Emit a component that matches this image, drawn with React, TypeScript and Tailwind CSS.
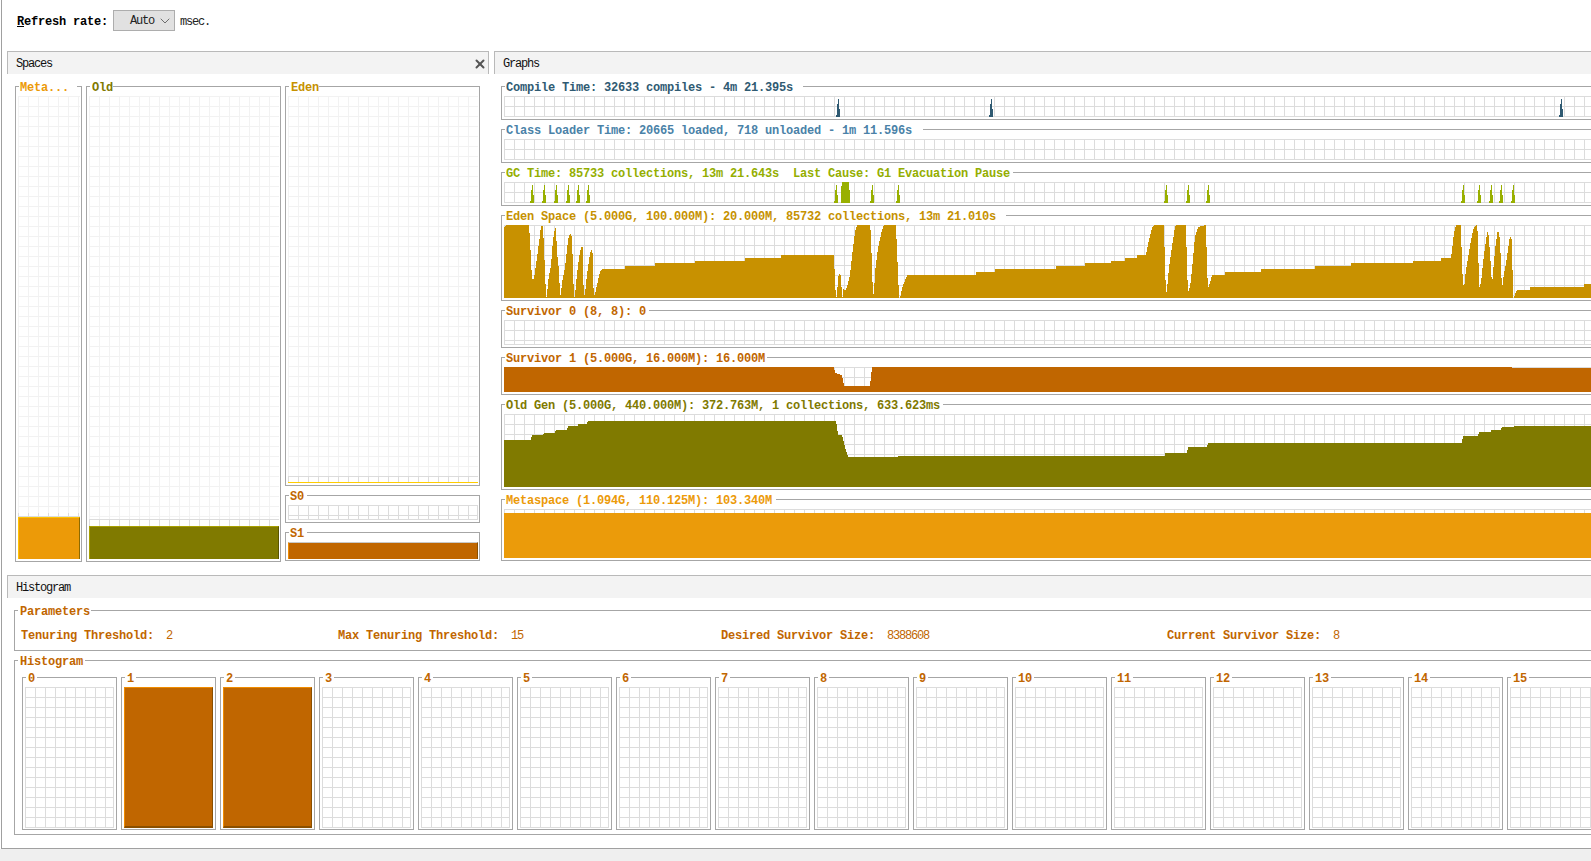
import React from "react";
import { X, ChevronDown } from "lucide-react";

const GRID =
  "bg-[linear-gradient(to_right,#dcdcdc_1px,transparent_1px),linear-gradient(to_bottom,#dcdcdc_1px,transparent_1px)] bg-[size:10px_10px]";
const LIGHT =
  "bg-[linear-gradient(to_right,#f2f2f2_1px,transparent_1px),linear-gradient(to_bottom,#f2f2f2_1px,transparent_1px)] bg-[size:10px_10px]";
const THIN = "text-[12px] tracking-[-1.2px] font-normal";

function Box({
  title,
  color,
  titleW,
  h,
  w,
  pad = 2,
  children,
}: {
  title: string;
  color: string;
  titleW: number;
  h: number;
  w?: number;
  pad?: number;
  children: React.ReactNode;
}) {
  return (
    <div className="relative shrink-0 border border-[#a6a6a6] bg-white" style={{ height: h, width: w }}>
      <div
        className="absolute left-[3px] top-[-7px] h-[16px] whitespace-pre bg-white font-bold"
        style={{ color, width: titleW, paddingLeft: pad }}
      >
        {title}
      </div>
      {children}
    </div>
  );
}

function Spike({ x, top, base }: { x: number; top: number; base: number }) {
  return (
    <polygon
      points={`${x - 2},${base} ${x - 2},${base - 2} ${x - 1},${base - 2} ${x - 1},${top + 5} ${x},${top + 5} ${x},${top} ${x + 1},${top} ${x + 1},${top + 10} ${x + 2},${top + 10} ${x + 2},${base}`}
    />
  );
}

const EDEN =
  "504,298 504,227 506,225 529,225 530,240 531,260 532,279 534,279 536,265 538,250 540,235 541,226 543,226 544,250 545,270 546,297 547,297 548,282 551,265 553,240 555,228 556,228 557,253 559,270 560,295 561,295 562,282 565,268 568,240 570,234 571,234 572,238 573,270 574,297 575,297 576,283 579,258 581,247 583,247 583,275 584,295 585,295 586,283 589,260 591,250 592,250 593,255 593,280 594,295 595,295 597,285 600,272 602,269 625,269 625,266 655,266 655,263 695,263 695,261 745,261 745,258 781,258 781,255 834,255 835,283 836,297 837,297 838,277 840,273 841,277 842,297 843,297 843,288 845,291 847,287 850,275 853,248 855,232 857,225 870,225 871,235 872,270 873,294 874,294 875,272 878,248 882,230 884,225 896,225 897,252 898,272 899,298 900,298 903,285 907,276 907,275 976,275 976,272 995,272 995,269 1056,269 1056,266 1085,266 1085,263 1111,263 1111,261 1125,261 1125,258 1137,258 1137,255 1146,255 1147,250 1149,240 1152,228 1154,225 1164,225 1165,267 1166,292 1167,292 1168,277 1170,260 1173,240 1175,227 1176,225 1186,225 1187,268 1188,292 1190,287 1192,270 1195,237 1198,227 1206,225 1207,267 1208,289 1210,283 1212,275 1225,275 1225,272 1261,272 1261,269 1315,269 1315,266 1351,266 1351,263 1413,263 1413,261 1441,261 1441,258 1451,258 1452,250 1454,233 1456,225 1461,225 1462,268 1464,291 1465,277 1468,258 1471,240 1474,227 1477,225 1478,237 1479,288 1481,283 1483,263 1486,240 1488,229 1490,253 1492,285 1493,273 1495,250 1498,229 1500,240 1502,290 1503,280 1507,257 1510,236 1512,240 1513,298 1514,297 1517,290 1530,290 1530,287 1584,287 1584,284 1600,284 1600,298";

const S1 =
  "504,392 504,367 577,367 834,367 835,373 842,375 844,386 870,386 872,367 1512,367 1512,368 1600,368 1600,392";

const OLD =
  "504,487 504,440 531,440 532,435 543,435 544,433 555,433 556,430 567,430 568,426 578,426 578,424 587,424 588,421 835,421 836,420 838,435 842,435 845,447 848,457 898,457 898,456 1165,456 1165,453 1187,453 1188,447 1207,447 1208,443 1462,443 1463,436 1478,436 1479,432 1491,432 1491,430 1501,430 1502,427 1513,427 1514,426 1600,426 1600,487";

function Chart({ x = 504, y, h, children }: { x?: number; y: number; h: number; children: React.ReactNode }) {
  return (
    <svg
      className="absolute left-0 top-0"
      width={1100}
      height={h}
      viewBox={`${x} ${y} 1100 ${h}`}
      shapeRendering="crispEdges"
    >
      {children}
    </svg>
  );
}

function GraphBox({
  title,
  color,
  titleW,
  h,
  children,
}: {
  title: string;
  color: string;
  titleW: number;
  h: number;
  children?: React.ReactNode;
}) {
  return (
    <Box title={title} color={color} titleW={titleW} h={h} w={1200} pad={1}>
      <div className="h-full pb-[2px] pl-[2px] pr-[2px] pt-[9px]">
        <div className={`relative h-full border-b border-[#dcdcdc] ${GRID}`}>{children}</div>
      </div>
    </Box>
  );
}

function SpaceBox({
  title,
  color,
  titleW,
  w,
  h,
  pb = 2,
  pad = 2,
  children,
}: {
  title: string;
  color: string;
  titleW: number;
  w: number;
  h: number;
  pb?: number;
  pad?: number;
  children: React.ReactNode;
}) {
  return (
    <Box title={title} color={color} titleW={titleW} w={w} h={h} pad={pad}>
      <div className="flex h-full flex-col pl-[2px] pr-[1px] pt-[9px]" style={{ paddingBottom: pb }}>
        {children}
      </div>
    </Box>
  );
}

function Header({ children }: { children: React.ReactNode }) {
  return (
    <div
      className={`flex h-[23px] items-center justify-between border-l border-r border-t border-[#b9b9b9] bg-[#f3f3f3] pl-[8px] pr-px pt-px text-[#111] ${THIN}`}
    >
      {children}
    </div>
  );
}

function Param({ label, value, className }: { label: string; value: string; className: string }) {
  return (
    <div className={`flex shrink-0 whitespace-nowrap text-[#c16600] ${className}`}>
      <span className="font-bold">{label}</span>
      <span className={`ml-[12px] ${THIN}`}>{value}</span>
    </div>
  );
}

function Tile({ n, filled }: { n: number; filled: boolean }) {
  return (
    <Box title={String(n)} color="#c16600" titleW={n > 9 ? 18 : 11} w={95} h={153}>
      <div className="h-full pb-px pl-[2px] pr-[2px] pt-[9px]">
        {filled ? (
          <div className="h-full border-b-2 border-l border-r border-t border-b-[#8a4f00] border-l-[#f08c00] border-r-[#8a4f00] border-t-[#f08c00] bg-[#c06600]" />
        ) : (
          <div className={`h-full border-b border-r border-[#dcdcdc] ${GRID}`} />
        )}
      </div>
    </Box>
  );
}

export default function App() {
  return (
    <div className="h-[861px] w-[1591px] overflow-hidden bg-[#efefef] font-['Liberation_Mono',monospace] text-[12px] leading-[16px] tracking-[-0.2px]">
      <div className="h-[849px] bg-white">
        <div className="ml-px h-full border-b border-l border-[#a0a0a0]">
          {/* Toolbar */}
          <div className="flex h-[51px] items-start pl-[15px] pt-[10px]">
            <div className="mt-[4px] w-[96px] whitespace-nowrap font-bold text-black">
              <span className="underline">R</span>efresh rate:
            </div>
            <div className={`flex h-[21px] w-[62px] items-center justify-end gap-[3px] border border-[#adadad] bg-[#e1e1e1] pr-px text-[#222] ${THIN}`}>
              <span>Auto</span>
              <ChevronDown size={16} strokeWidth={1.25} className="text-[#555]" />
            </div>
            <div className={`ml-[5px] mt-[4px] text-[#222] ${THIN}`}>msec.</div>
          </div>

          {/* Upper panels */}
          <div className="flex h-[524px] w-[1700px] gap-[5px] pl-[5px]">
            <div className="w-[482px] shrink-0">
              <Header>
                <span>Spaces</span>
                <X size={14} strokeWidth={3.4} className="text-[#555]" />
              </Header>
              <div className="flex gap-[4px] pl-[8px] pt-[12px]">
                <SpaceBox title="Meta..." color="#ec9a08" titleW={58} w={67} h={476} pad={1}>
                  <div className={`flex-1 ${LIGHT}`} />
                  <div className={`h-[4px] ${GRID} bg-[position:0_3px]`} />
                  <div className="h-[42px] border-l border-r border-t border-l-[#ffc400] border-r-[#8c6a00] border-t-[#ffc400] bg-[#ec9a08]" />
                </SpaceBox>
                <SpaceBox title="Old" color="#807900" titleW={23} w={195} h={476}>
                  <div className={`flex-1 ${LIGHT}`} />
                  <div className={`h-[7px] ${GRID}`} />
                  <div className="h-[33px] border-l border-r border-t border-l-[#a8a000] border-r-[#5a5500] border-t-[#a8a000] bg-[#807a00]" />
                </SpaceBox>
                <div className="flex flex-col gap-[9px]">
                  <SpaceBox title="Eden" color="#c69100" titleW={30} w={195} h={400}>
                    <div className={`flex-1 ${LIGHT}`} />
                    <div className={`h-[6px] ${GRID}`} />
                    <div className="h-px bg-[#ffcc00]" />
                  </SpaceBox>
                  <SpaceBox title="S0" color="#c16600" titleW={18} w={195} h={28} pad={1}>
                    <div className={`flex-1 border-b border-r border-[#dcdcdc] ${GRID}`} />
                  </SpaceBox>
                  <SpaceBox title="S1" color="#c16600" titleW={18} w={195} h={29} pb={1} pad={1}>
                    <div className="flex-1 border-l border-r border-t border-l-[#f08c00] border-r-[#8a4f00] border-t-[#c8c8c8] bg-[#c06600]" />
                  </SpaceBox>
                </div>
              </div>
            </div>

            <div className="w-[1210px] shrink-0">
              <Header>
                <span>Graphs</span>
              </Header>
              <div className="flex flex-col gap-[9px] pl-[7px] pt-[12px]">
                <GraphBox title="Compile Time: 32633 compiles - 4m 21.395s" color="#2f5a72" titleW={298} h={34}>
                  <Chart y={96} h={21}>
                    <g fill="#2f5a72">
                      <Spike x={838} top={99} base={117} />
                      <Spike x={991} top={99} base={117} />
                      <Spike x={1561} top={99} base={117} />
                    </g>
                  </Chart>
                </GraphBox>
                <GraphBox title="Class Loader Time: 20665 loaded, 718 unloaded - 1m 11.596s" color="#4a82a8" titleW={418} h={34} />
                <GraphBox title="GC Time: 85733 collections, 13m 21.643s  Last Cause: G1 Evacuation Pause" color="#94ae00" titleW={508} h={34}>
                  <Chart y={182} h={21}>
                    <g fill="#99b000">
                      {[532, 544, 556, 568, 578, 588, 836, 872, 898, 1166, 1188, 1208, 1463, 1479, 1491, 1501, 1513].map((x) => (
                        <Spike key={x} x={x} top={185} base={203} />
                      ))}
                      <polygon points="841,203 841,186 842,186 842,182 849,182 849,190 850,190 850,203" />
                    </g>
                  </Chart>
                </GraphBox>
                <GraphBox title="Eden Space (5.000G, 100.000M): 20.000M, 85732 collections, 13m 21.010s" color="#c69100" titleW={501} h={86}>
                  <Chart y={225} h={73}>
                    <polygon points={EDEN} fill="#c89100" />
                  </Chart>
                </GraphBox>
                <GraphBox title="Survivor 0 (8, 8): 0" color="#c16600" titleW={144} h={38} />
                <GraphBox title="Survivor 1 (5.000G, 16.000M): 16.000M" color="#c16600" titleW={262} h={38}>
                  <Chart y={367} h={25}>
                    <polygon points={S1} fill="#c06600" />
                  </Chart>
                </GraphBox>
                <GraphBox title="Old Gen (5.000G, 440.000M): 372.763M, 1 collections, 633.623ms" color="#807900" titleW={438} h={86}>
                  <Chart y={414} h={73}>
                    <polygon points={OLD} fill="#807a00" />
                  </Chart>
                </GraphBox>
                <GraphBox title="Metaspace (1.094G, 110.125M): 103.340M" color="#ec9a08" titleW={271} h={62}>
                  <Chart y={509} h={49}>
                    <rect x={504} y={513} width={1100} height={45} fill="#eb9b0a" />
                  </Chart>
                </GraphBox>
              </div>
            </div>
          </div>

          {/* Histogram */}
          <div className="w-[1700px] pl-[5px]">
            <Header>
              <span>Histogram</span>
            </Header>
            <div className="flex flex-col gap-[9px] pl-[7px] pt-[12px]">
              <Box title="Parameters" color="#c16600" titleW={73} h={41} w={1690}>
                <div className="flex h-full items-center pl-[6px] pt-[11px]">
                  <Param label="Tenuring Threshold:" value="2" className="w-[317px]" />
                  <Param label="Max Tenuring Threshold:" value="15" className="w-[383px]" />
                  <Param label="Desired Survivor Size:" value="8388608" className="w-[446px]" />
                  <Param label="Current Survivor Size:" value="8" className="w-[200px]" />
                </div>
              </Box>
              <Box title="Histogram" color="#c16600" titleW={67} h={175} w={1690}>
                <div className="flex gap-[4px] pl-[7px] pt-[16px]">
                  {Array.from({ length: 16 }, (_, i) => (
                    <Tile key={i} n={i} filled={i === 1 || i === 2} />
                  ))}
                </div>
              </Box>
            </div>
          </div>
        </div>
      </div>
    </div>
  );
}
